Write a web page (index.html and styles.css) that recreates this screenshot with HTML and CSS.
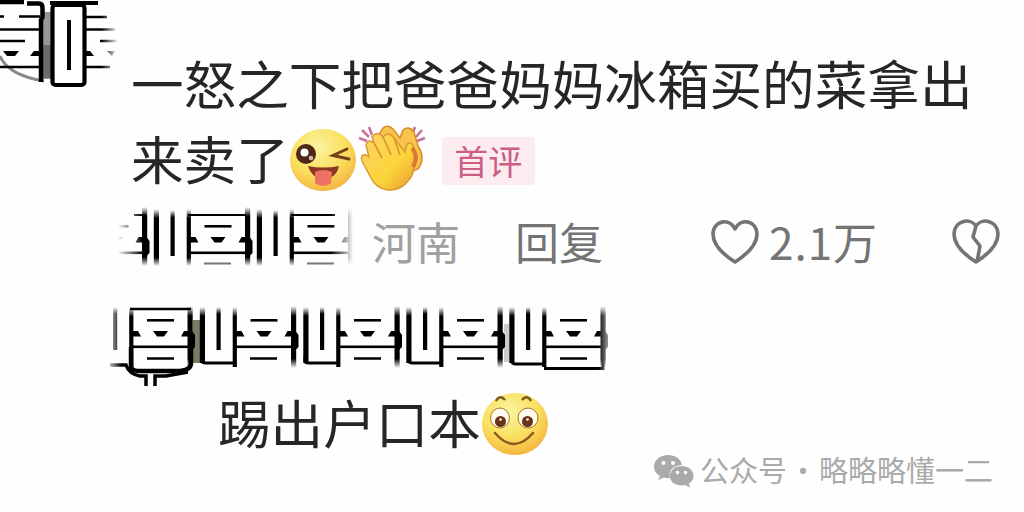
FILE: index.html
```
<!DOCTYPE html>
<html lang="zh-CN">
<head>
    <meta charset="UTF-8">
    <title>评论</title>
    <link rel="stylesheet" href="styles.css">
</head>
<body>
    <!-- Shared pieces -->
    <svg class="defs" aria-hidden="true">
        <defs>
            <radialGradient id="cara" cx="42%" cy="30%" r="75%">
                <stop offset="0" stop-color="#fbf3a0"/>
                <stop offset=".55" stop-color="#fae060"/>
                <stop offset="1" stop-color="#f3b03c"/>
            </radialGradient>
            <linearGradient id="mano" x1="0" y1="0" x2="1" y2="1">
                <stop offset="0" stop-color="#fbd568"/>
                <stop offset=".6" stop-color="#fcd43b"/>
                <stop offset="1" stop-color="#e99a30"/>
            </linearGradient>
            <linearGradient id="barra" x1="0" y1="0" x2="0" y2="1">
                <stop offset="0" stop-opacity="0"/>
                <stop offset=".16" stop-opacity="1"/>
                <stop offset=".85" stop-opacity="1"/>
                <stop offset="1" stop-opacity="0"/>
            </linearGradient>
            <linearGradient id="corta" x1="0" y1="0" x2="0" y2="1">
                <stop offset="0" stop-opacity="0"/>
                <stop offset=".16" stop-opacity="1"/>
            </linearGradient>
            <g id="bloque">
                <rect x="52" y="25" width="27" height="2.6"/>
                <path d="M36 37h7l3 5.500h-10zM58 37h15l-4 5.500h-7zM89 37h8l3 4v12l-3 3h-3V42.500h-8z"/>
                <rect x="36" y="51.500" width="59" height="2.600"/>
            </g>
            <g id="corto">
                <rect x="1.300" y="9" width="5.200" height="57" fill="url(#barra)"/>
                <rect x="18" y="10" width="4.200" height="46" fill="url(#corta)"/>
                <rect x="34.200" y="9" width="4.200" height="57" fill="url(#barra)"/>
                <rect x="92.500" y="7" width="5.200" height="59" fill="url(#barra)"/>
                <use href="#bloque"/>
            </g>
            <g id="largo">
                <rect x="1.300" y="13" width="5.200" height="56" fill="url(#corta)"/>
                <rect x="18" y="13" width="4.200" height="43" fill="url(#corta)"/>
                <rect x="34.200" y="13" width="4.200" height="60" fill="url(#corta)"/>
                <rect x="92.500" y="12" width="5.200" height="62" fill="url(#barra)"/>
                <use href="#bloque"/>
            </g>
        </defs>
    </svg>

    <svg class="avatar" width="130" height="100" viewBox="0 0 130 100">
        <rect x="43" y="12" width="8" height="67" fill="#999791"/>
        <rect x="43" y="45" width="8" height="33" fill="#716b68"/>
        <path d="M0 56Q8 75 44 81" fill="none" stroke="#888" stroke-width="3"/>
        <g stroke="#000" fill="none">
            <path d="M0 2H24M27 3.500H39Q42.500 3.500 42.500 8V17L41 20V82" stroke-width="4.500"/>
            <path d="M0 16.500H4M19 16.500H40M0 29.500H40M0 41H25M0 67H40" stroke-width="2.500"/>
            <path d="M86 17H107M86 29.500H115M100 41H117M86 67H110" stroke-width="2.500"/>
            <rect x="52.500" y="5" width="32" height="80" rx="3" fill="#fff" stroke-width="4.200"/>
            <path d="M69 20V70" stroke-width="4"/>
            <path d="M50 3H98" stroke-width="4"/>
        </g>
        <path d="M3 51H19L15 56H7zM34 51H43V56H30zM86 51H90L94 56H86zM107 51H115L112 56z"/>
    </svg>

    <div class="comment">
        <p class="text">一怒之下把爸爸妈妈冰箱买的菜拿出</p>
        <div class="line">
            <p class="text">来卖了</p>
            <svg class="emoji wink" viewBox="0 0 68 64">
                <ellipse cx="34" cy="32" rx="33" ry="31" fill="url(#cara)"/>
                <circle cx="17" cy="26" r="10" fill="#4f2716"/>
                <circle cx="15.500" cy="24.500" r="4" fill="#fff"/>
                <circle cx="22" cy="30" r="2.300" fill="#d6b8a8"/>
                <path d="M58 21L44 27.500L60 31" fill="none" stroke="#744117" stroke-width="3" stroke-linecap="round"/>
                <path d="M19 38Q34 41 50 38Q48 47 42 49H27Q21 45 19 38z" fill="#8d3721"/>
                <path d="M26 44Q34 40 43 44L42 55Q34 61 26 55z" fill="#ee7263"/>
            </svg>
            <svg class="emoji clap" viewBox="0 0 70 68">
                <g stroke="#c8709c" stroke-width="2.500">
                    <path d="M2 14l8 3M5 6l7 7M12 3l3 8M68 14l-8 3M65 6l-6 7M58 3l-3 8"/>
                </g>
                <path d="M20 14L26 4Q31 0 36 5L43 14L46 6Q52 1 57 8L61 22Q69 34 61 45L43 52z" fill="#f8c44c" stroke="#d98a2c" stroke-width="1.500"/>
                <path d="M5 37Q3 30 9 31L12 33L9 21Q11 14 17 19L15 13Q20 6 26 13L28 11Q33 8 37 14L48 28L50 20Q56 17 57 25Q60 48 51 57Q43 67 30 66Q19 64 14 54z" fill="url(#mano)" stroke="#d99a34" stroke-width="1.500"/>
                <path d="M17 19L25 34M26 13L34 31M37 14L43 31" fill="none" stroke="#d9962d" stroke-width="1.700"/>
                <path d="M55 24Q62 32 56 43" fill="none" stroke="#dc7732" stroke-width="4"/>
            </svg>
            <span class="tag">首评</span>
        </div>

        <div class="meta">
            <svg class="name" width="245" height="75" viewBox="113 200 245 75">
                <use href="#corto" x="49.500" y="200"/>
                <use href="#corto" x="152.500" y="200"/>
                <use href="#corto" x="255.500" y="200"/>
                <path d="M134 215H146M188 215H246M291 215H335" stroke="#000" stroke-width="2"/>
                <path d="M204 263.500H231M307 263.500H334" stroke="#777" stroke-width="2"/>
            </svg>
            <span class="place">河南</span>
            <span class="reply-btn">回复</span>
            <svg class="heart" viewBox="0 0 48 46">
                <path d="M24 43C13 36 2 26 2 15C2 2 18-2 24 10C30-2 46 2 46 15C46 26 35 36 24 43z"/>
            </svg>
            <span class="likes">2.1万</span>
            <svg class="heart broken" viewBox="0 0 48 46">
                <path d="M24 43C13 36 2 26 2 15C2 2 18-2 24 7C30-2 46 2 46 15C46 26 35 36 24 43zM24 7L21 18L28 27L25 43"/>
            </svg>
        </div>
    </div>

    <div class="reply">
        <svg class="user" width="530" height="100" viewBox="95 292 530 100">
            <rect x="193" y="319" width="8" height="43" fill="#777c62"/>
            <rect x="504" y="323" width="5" height="38" fill="#ccc"/>
            <use href="#largo" x="198.500" y="293"/>
            <use href="#largo" x="302" y="293"/>
            <use href="#largo" x="405" y="293"/>
            <use href="#largo" x="508" y="293"/>
            <svg x="110" y="292" width="90" height="90" viewBox="110 292 90 90">
                <use href="#largo" x="95" y="293"/>
            </svg>
            <g fill="none" stroke="#000">
                <path d="M147 357.500H174M250 357.500H277M354 357.500H381M457 357.500H484M560 357.500H587" stroke-width="2.600"/>
                <path d="M130 308H191" stroke-width="2.500"/>
                <path d="M131 346V366Q132 370 140 370H180Q191 369 191 362V346" stroke-width="4.500"/>
                <path d="M110 364H126Q129 373 140 375H146V385M155 385V375H166L188 371" stroke-width="3.500"/>
                <path d="M202 355V360Q202 362 206 362H234M305 355V360Q305 362 309 362H337M409 355V360Q409 362 413 362H441M512 355V360Q512 363 516 363H544" stroke-width="3"/>
                <path d="M544 367.500H603V346" stroke-width="3"/>
            </g>
        </svg>
        <div class="line">
            <p class="text">踢出户口本</p>
            <svg class="emoji smile" viewBox="0 0 68 64">
                <ellipse cx="34" cy="32" rx="33" ry="31" fill="url(#cara)"/>
                <path d="M15 9Q19 2 24 8M41 8Q46 2 50 9" fill="none" stroke="#765b22" stroke-width="2.500"/>
                <ellipse cx="19" cy="26" rx="9.500" ry="10" fill="#fffbed" stroke="#a87a2b"/>
                <ellipse cx="47" cy="26" rx="10" ry="10" fill="#fffbed" stroke="#a87a2b"/>
                <circle cx="19.500" cy="29.500" r="5.500" fill="#683319"/>
                <circle cx="46.500" cy="29.500" r="5.500" fill="#683319"/>
                <circle cx="19.500" cy="27.500" r="1.300" fill="#fff"/>
                <circle cx="46.500" cy="27.500" r="1.300" fill="#fff"/>
                <path d="M14 41Q33 63 52 41" fill="none" stroke="#8b591c" stroke-width="2.500" stroke-linecap="round"/>
            </svg>
        </div>
    </div>

    <div class="watermark">
        <svg width="40" height="34" viewBox="0 0 40 34">
            <path d="M14 1C6 1 0 6 0 13C0 17 2 20 6 22L4 26L10 23.500Q13 24.500 16 24C14 16 20 11 28 11C27 5 21 1 14 1z"/>
            <path d="M27.500 12C21 12 16 16 16 22C16 28 21 31.500 28 31.500L31 31L36 33.500L35 29.500C38 27.500 39.500 25 39.500 22C39.500 16 34 12 27.500 12z"/>
            <g fill="#fff">
                <circle cx="9.500" cy="9" r="2"/>
                <circle cx="19" cy="9" r="2"/>
                <circle cx="23.500" cy="18.500" r="1.700"/>
                <circle cx="31.500" cy="18.500" r="1.700"/>
            </g>
        </svg>
        <span>公众号</span>
        <span class="dot">·</span>
        <span>略略略懂一二</span>
    </div>
</body>
</html>
```
FILE: styles.css
```
/* General */
body {
    margin: 0;
    width: 1024px;
    height: 512px;
    overflow: hidden;
    position: relative;
    background-color: #fefefe;
    font-family: "Noto Sans CJK SC", sans-serif;
}
.defs {
    position: absolute;
    width: 0;
    height: 0;
}
svg {
    display: block;
    flex-shrink: 0;
}
.avatar {
    position: absolute;
    left: 0;
    top: 0;
    -webkit-mask-image: linear-gradient(to right, #000 78%, transparent 91%);
    mask-image: linear-gradient(to right, #000 78%, transparent 91%);
}
/* Comment */
.comment {
    padding: 45px 0 0 131px;
}
.text {
    margin: 0;
    font-size: 52.6px;
    line-height: 75px;
    color: #252628;
    white-space: nowrap;
}
.line {
    display: flex;
    align-items: center;
}
.emoji {
    width: 68px;
    height: 64px;
    margin-top: 4px;
}
.clap {
    width: 70px;
    height: 68px;
    margin-top: 0;
}
.tag {
    margin: 7px 0 0 15px;
    width: 93px;
    height: 48px;
    border-radius: 4px;
    background-color: #fcecf0;
    color: #cc5e85;
    font-size: 34px;
    line-height: 47px;
    text-align: center;
}
.meta {
    display: flex;
    align-items: center;
    height: 75px;
    margin: 9px 0 0 -18px;
    font-size: 44px;
    line-height: 75px;
    color: #747474;
}
.name {
    margin-bottom: 8px;
    -webkit-mask-image: linear-gradient(to right, transparent 2%, #000 12%, #000 89%, transparent 98%);
    mask-image: linear-gradient(to right, transparent 2%, #000 12%, #000 89%, transparent 98%);
}
.place {
    margin-left: 14px;
    color: #a0a0a0;
}
.reply-btn {
    margin-left: 55px;
}
.heart {
    width: 48px;
    height: 46px;
    margin-left: 108px;
    fill: none;
    stroke: #747474;
    stroke-width: 3.6;
    stroke-linejoin: round;
}
.likes {
    margin-left: 10px;
    letter-spacing: 1px;
}
.broken {
    margin-left: 74px;
}
/* Reply */
.reply {
    padding: 14px 0 0 95px;
}
.user {
    -webkit-mask-image: linear-gradient(to right, transparent 2%, #000 5%, #000 95%, transparent 98%);
    mask-image: linear-gradient(to right, transparent 2%, #000 5%, #000 95%, transparent 98%);
}
.reply .line {
    margin: -9px 0 0 123px;
}
/* Watermark */
.watermark {
    position: absolute;
    left: 654px;
    top: 453px;
    display: flex;
    align-items: center;
    height: 35px;
    font-size: 29px;
    line-height: 35px;
    color: #aaa;
}
.watermark svg {
    margin-right: 6px;
    fill: #aaa;
}
.watermark span {
    margin-bottom: 3px;
}
.dot {
    width: 32px;
    text-align: center;
}
```
